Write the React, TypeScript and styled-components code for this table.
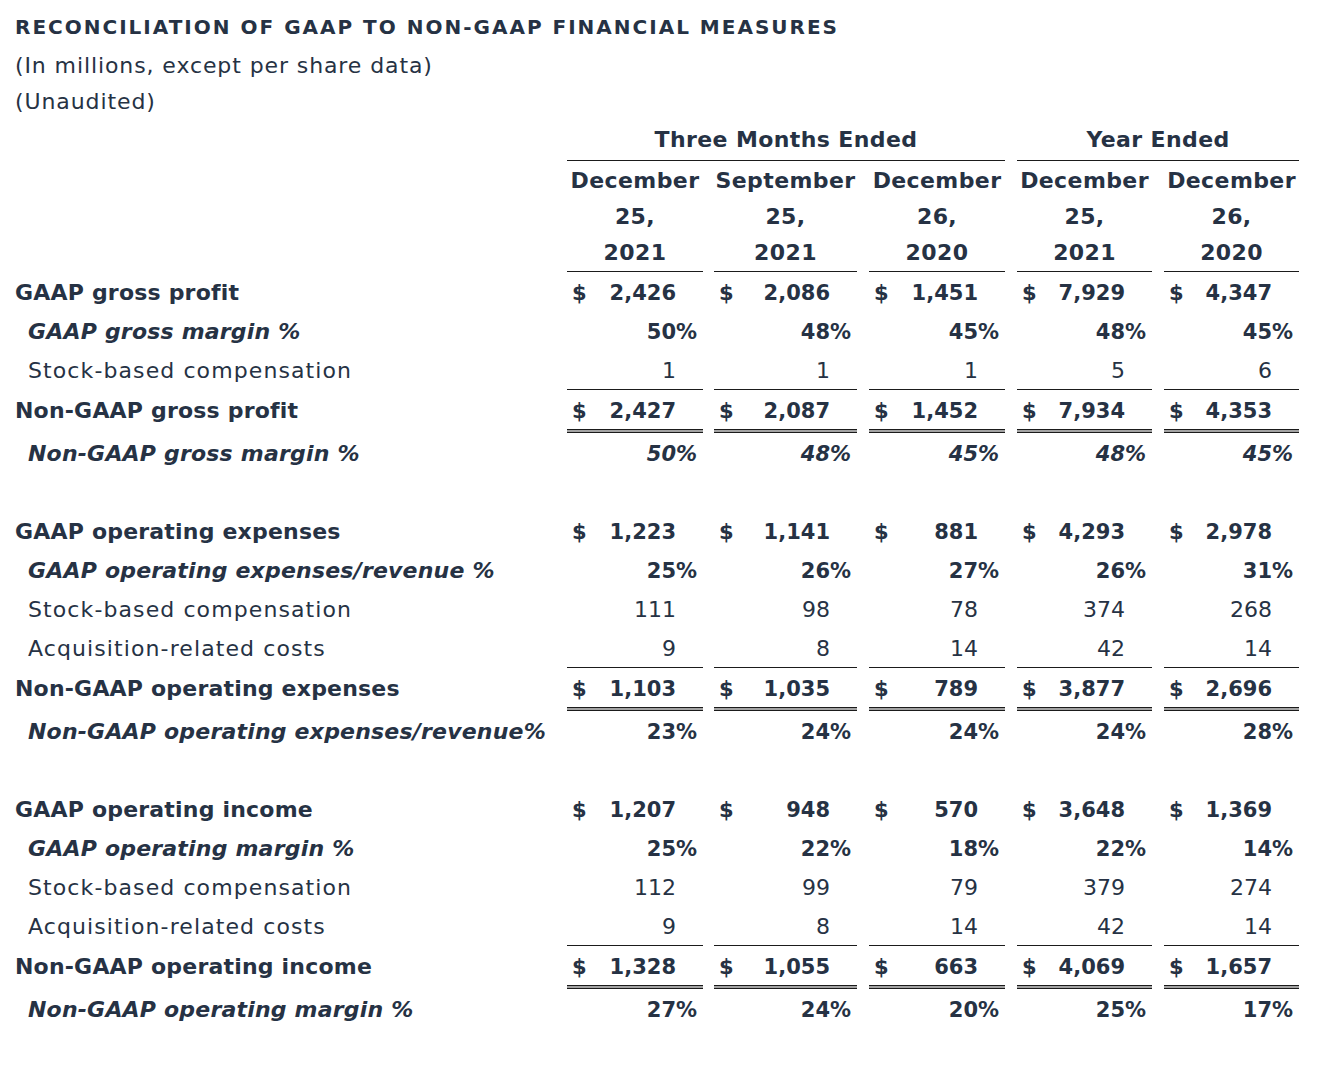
import React from "react";
import styled, { createGlobalStyle, css } from "styled-components";

const Global = createGlobalStyle`
  html, body { margin: 0; padding: 0; background: #ffffff; }
  body {
    font-family: "DejaVu Sans", "Noto Sans", sans-serif;
    color: #263244;
  }
`;

const Page = styled.div`
  padding: 9px 0 40px 15px;
  width: 1284px;
  font-size: 22px;
`;

const Title = styled.h1`
  margin: 0 0 3px 0;
  font-size: 20px;
  line-height: 36px;
  font-weight: 700;
  letter-spacing: 2px;
`;

const Sub = styled.div`
  line-height: 36px;
  font-weight: 400;
  letter-spacing: 0.9px;
`;

const Table = styled.table`
  border-collapse: separate;
  border-spacing: 0;
  table-layout: fixed;
  width: 1284px;
  font-size: 22px;
`;

const GroupHead = styled.th`
  font-weight: 700;
  text-align: center;
  line-height: 40px;
  padding: 0;
  letter-spacing: 0.4px;
  border-bottom: 1px solid #1b1b1b;
`;

const ColHead = styled.th`
  font-weight: 700;
  text-align: center;
  line-height: 36px;
  padding: 2px 0 0 0;
  letter-spacing: 0.4px;
  border-bottom: 1px solid #1b1b1b;
  white-space: pre-line;
  vertical-align: top;
`;

const Blank = styled.td`
  padding: 0;
`;

type LabelKind = "bold" | "italic" | "plain";

const Label = styled.td<{ $kind: LabelKind }>`
  padding: 3px 0 0 ${(p) => (p.$kind === "bold" ? 0 : 13)}px;
  line-height: 36px;
  white-space: nowrap;
  vertical-align: top;
  font-weight: ${(p) => (p.$kind === "plain" ? 400 : 700)};
  font-style: ${(p) => (p.$kind === "italic" ? "italic" : "normal")};
  letter-spacing: ${(p) => (p.$kind === "plain" ? "1.1px" : "0.2px")};
`;

type Rule = "none" | "single" | "double";

const Value = styled.td<{ $rule: Rule; $bold: boolean; $italic: boolean }>`
  padding: 3px 6px 0 5px;
  line-height: 36px;
  vertical-align: top;
  font-size: ${(p) => (p.$bold ? 21 : 22)}px;
  font-weight: ${(p) => (p.$bold ? 700 : 400)};
  font-style: ${(p) => (p.$italic ? "italic" : "normal")};
  ${(p) =>
    p.$rule === "single" &&
    css`
      border-bottom: 1px solid #1b1b1b;
    `}
  ${(p) =>
    p.$rule === "double" &&
    css`
      padding-bottom: 4px;
      box-shadow: inset 0 -1px 0 #1b1b1b, inset 0 -3px 0 #a3a3a3,
        inset 0 -4px 0 #1b1b1b;
    `}
`;

const ValueInner = styled.div`
  display: flex;
  align-items: baseline;
  height: 36px;
`;

const Cur = styled.span`
  flex: none;
`;

const Num = styled.span`
  flex: 1;
  text-align: right;
`;

const Suf = styled.span`
  flex: none;
  width: 21px;
  text-align: right;
`;

type Row = {
  label: string;
  kind: LabelKind;
  values?: string[];
  dollar?: boolean;
  pct?: boolean;
  italicValues?: boolean;
  rule?: Rule;
  blank?: boolean;
};

const rows: Row[] = [
  { label: "GAAP gross profit", kind: "bold", dollar: true, values: ["2,426", "2,086", "1,451", "7,929", "4,347"] },
  { label: "GAAP gross margin %", kind: "italic", pct: true, values: ["50", "48", "45", "48", "45"] },
  { label: "Stock-based compensation", kind: "plain", rule: "single", values: ["1", "1", "1", "5", "6"] },
  { label: "Non-GAAP gross profit", kind: "bold", dollar: true, rule: "double", values: ["2,427", "2,087", "1,452", "7,934", "4,353"] },
  { label: "Non-GAAP gross margin %", kind: "italic", pct: true, italicValues: true, values: ["50", "48", "45", "48", "45"] },
  { label: "", kind: "plain", blank: true },
  { label: "GAAP operating expenses", kind: "bold", dollar: true, values: ["1,223", "1,141", "881", "4,293", "2,978"] },
  { label: "GAAP operating expenses/revenue %", kind: "italic", pct: true, values: ["25", "26", "27", "26", "31"] },
  { label: "Stock-based compensation", kind: "plain", values: ["111", "98", "78", "374", "268"] },
  { label: "Acquisition-related costs", kind: "plain", rule: "single", values: ["9", "8", "14", "42", "14"] },
  { label: "Non-GAAP operating expenses", kind: "bold", dollar: true, rule: "double", values: ["1,103", "1,035", "789", "3,877", "2,696"] },
  { label: "Non-GAAP operating expenses/revenue%", kind: "italic", pct: true, values: ["23", "24", "24", "24", "28"] },
  { label: "", kind: "plain", blank: true },
  { label: "GAAP operating income", kind: "bold", dollar: true, values: ["1,207", "948", "570", "3,648", "1,369"] },
  { label: "GAAP operating margin %", kind: "italic", pct: true, values: ["25", "22", "18", "22", "14"] },
  { label: "Stock-based compensation", kind: "plain", values: ["112", "99", "79", "379", "274"] },
  { label: "Acquisition-related costs", kind: "plain", rule: "single", values: ["9", "8", "14", "42", "14"] },
  { label: "Non-GAAP operating income", kind: "bold", dollar: true, rule: "double", values: ["1,328", "1,055", "663", "4,069", "1,657"] },
  { label: "Non-GAAP operating margin %", kind: "italic", pct: true, values: ["27", "24", "20", "25", "17"] },
];

const headers = ["December\n25,\n2021", "September\n25,\n2021", "December\n26,\n2020", "December\n25,\n2021", "December\n26,\n2020"];
const colWidths = [136, 143, 136, 135, 135];
const spacerWidths = [11, 12, 12, 12];

function Cols() {
  const cols: React.ReactNode[] = [<col key="label" style={{ width: 552 }} />];
  colWidths.forEach((w, i) => {
    if (i > 0) cols.push(<col key={`s${i}`} style={{ width: spacerWidths[i - 1] }} />);
    cols.push(<col key={`c${i}`} style={{ width: w }} />);
  });
  return <colgroup>{cols}</colgroup>;
}

function DataRow({ row }: { row: Row }) {
  if (row.blank) {
    return (
      <tr>
        <Label $kind="plain" colSpan={10}>{"\u00a0"}</Label>
      </tr>
    );
  }
  const cells: React.ReactNode[] = [];
  (row.values || []).forEach((v, i) => {
    if (i > 0) cells.push(<Blank key={`s${i}`} />);
    cells.push(
      <Value
        key={`v${i}`}
        $rule={row.rule || "none"}
        $bold={row.kind !== "plain"}
        $italic={!!row.italicValues}
      >
        <ValueInner>
          <Cur>{row.dollar ? "$" : ""}</Cur>
          <Num>{v}</Num>
          <Suf>{row.pct ? "%" : ""}</Suf>
        </ValueInner>
      </Value>
    );
  });
  return (
    <tr>
      <Label $kind={row.kind}>{row.label}</Label>
      {cells}
    </tr>
  );
}

export default function App() {
  return (
    <>
      <Global />
      <Page>
        <Title>RECONCILIATION OF GAAP TO NON-GAAP FINANCIAL MEASURES</Title>
        <Sub>(In millions, except per share data)</Sub>
        <Sub>(Unaudited)</Sub>
        <Table>
          <Cols />
          <thead>
            <tr>
              <Blank />
              <GroupHead colSpan={5}>Three Months Ended</GroupHead>
              <Blank />
              <GroupHead colSpan={3}>Year Ended</GroupHead>
            </tr>
            <tr>
              <Blank />
              {headers.map((h, i) => (
                <React.Fragment key={i}>
                  {i > 0 && <Blank />}
                  <ColHead>{h}</ColHead>
                </React.Fragment>
              ))}
            </tr>
          </thead>
          <tbody>
            {rows.map((r, i) => (
              <DataRow key={i} row={r} />
            ))}
          </tbody>
        </Table>
      </Page>
    </>
  );
}
